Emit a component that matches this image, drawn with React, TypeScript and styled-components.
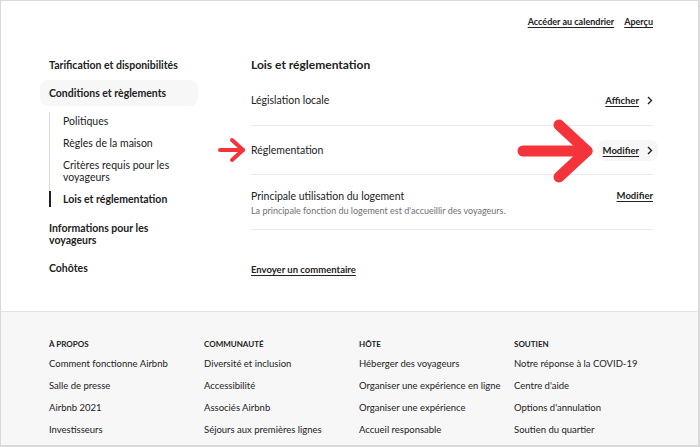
import styled, { createGlobalStyle } from 'styled-components';

const Global = createGlobalStyle`
  html, body { margin: 0; padding: 0; background: #fff; }
  body { font-family: Lato, "Liberation Sans", sans-serif; color: #222; }
  * { box-sizing: border-box; }
`;

const Frame = styled.div`
  position: relative;
  width: 700px;
  height: 447px;
  border: 1px solid #d9d9d9;
  border-right-width: 2px;
  border-bottom-width: 2px;
  overflow: hidden;
  display: flex;
  flex-direction: column;
`;

const Top = styled.div`
  height: 310px;
  padding: 10px 45px 0 39px;
`;

const TopLinks = styled.div`
  display: flex;
  justify-content: flex-end;
  gap: 10px;
  height: 20px;
  align-items: center;
`;

const Link = styled.a<{ $size?: number }>`
  font-size: ${p => p.$size ?? 10}px;
  font-weight: 700;
  color: #222;
  text-decoration: underline;
  text-underline-offset: 2px;
  cursor: pointer;
`;

const Columns = styled.div`
  display: flex;
  margin-top: 21px;
`;

const Sidebar = styled.nav`
  width: 158px;
  display: flex;
  flex-direction: column;
`;

const NavHead = styled.div<{ $active?: boolean }>`
  font-size: 10.5px;
  font-weight: 700;
  line-height: 12px;
  padding: 7px 9px;
  border-radius: 8px;
  background: ${p => (p.$active ? '#f7f7f7' : 'transparent')};
  & + & { margin-top: 2px; }
`;

const SubList = styled.div`
  margin: 6px 0 8px 9px;
  border-left: 1px solid #dddddd;
  display: flex;
  flex-direction: column;
  gap: 10px;
  padding: 3px 0 2px;
`;

const SubItem = styled.div<{ $active?: boolean }>`
  position: relative;
  font-size: 10.5px;
  line-height: 12px;
  padding-left: 13px;
  font-weight: ${p => (p.$active ? 700 : 400)};
  &::before {
    content: '';
    display: ${p => (p.$active ? 'block' : 'none')};
    position: absolute;
    left: -1px;
    top: -2px;
    bottom: -2px;
    width: 2px;
    background: #222;
  }
`;

const Main = styled.main`
  margin-left: 53px;
  flex: 1;
`;

const Title = styled.h2`
  margin: 0 0 3px;
  font-size: 12px;
  font-weight: 700;
  line-height: 16px;
  padding-top: 5px;
`;

const Row = styled.div<{ $h: number; $top?: boolean }>`
  height: ${p => p.$h}px;
  border-bottom: 1px solid #ebebeb;
  display: flex;
  align-items: ${p => (p.$top ? 'flex-start' : 'center')};
  justify-content: space-between;
  padding-top: ${p => (p.$top ? 15 : 0)}px;
`;

const RowText = styled.div`
  display: flex;
  flex-direction: column;
  gap: 2px;
`;

const RowLabel = styled.div`
  font-size: 10.5px;
  line-height: 13px;
`;

const RowSub = styled.div`
  font-size: 9px;
  line-height: 11px;
  color: #717171;
`;

const Action = styled.div<{ $shaded?: boolean }>`
  display: flex;
  align-items: center;
  gap: 8px;
  padding: 5px 5px;
  margin-right: -5px;
  border-radius: 7px;
  background: ${p => (p.$shaded ? '#f7f7f7' : 'transparent')};
`;

const Feedback = styled.div`
  margin-top: 27px;
`;

const Footer = styled.footer`
  flex: 1;
  border-top: 1px solid #e4e4e4;
  background: #f7f7f7;
  display: grid;
  grid-template-columns: repeat(4, 155px);
  padding: 27px 0 0 48px;
`;

const FooterCol = styled.div`
  display: flex;
  flex-direction: column;
`;

const FooterHead = styled.div`
  font-size: 8px;
  font-weight: 700;
  line-height: 10px;
  text-transform: uppercase;
  margin-bottom: 9px;
`;

const FooterLink = styled.div`
  font-size: 9.5px;
  line-height: 12px;
  & + & { margin-top: 10px; }
`;

const Arrow = styled.svg`
  position: absolute;
  pointer-events: none;
  overflow: visible;
`;

const Chevron = () => (
  <svg width="6" height="9" viewBox="0 0 6 9">
    <path d="M1 1 L4.5 4.5 L1 8" fill="none" stroke="#222" strokeWidth="1.4" />
  </svg>
);

const footer = [
  { head: 'À propos', items: ['Comment fonctionne Airbnb', 'Salle de presse', 'Airbnb 2021', 'Investisseurs'] },
  { head: 'Communauté', items: ['Diversité et inclusion', 'Accessibilité', 'Associés Airbnb', 'Séjours aux premières lignes'] },
  { head: 'Hôte', items: ['Héberger des voyageurs', 'Organiser une expérience en ligne', 'Organiser une expérience', 'Accueil responsable'] },
  { head: 'Soutien', items: ['Notre réponse à la COVID-19', "Centre d'aide", "Options d'annulation", 'Soutien du quartier'] },
];

export default function App() {
  return (
    <>
      <Global />
      <Frame>
        <Top>
          <TopLinks>
            <Link $size={9}>Accéder au calendrier</Link>
            <Link $size={9}>Aperçu</Link>
          </TopLinks>
          <Columns>
            <Sidebar>
              <NavHead>Tarification et disponibilités</NavHead>
              <NavHead $active>Conditions et règlements</NavHead>
              <SubList>
                <SubItem>Politiques</SubItem>
                <SubItem>Règles de la maison</SubItem>
                <SubItem>Critères requis pour les<br />voyageurs</SubItem>
                <SubItem $active>Lois et réglementation</SubItem>
              </SubList>
              <NavHead>Informations pour les<br />voyageurs</NavHead>
              <NavHead>Cohôtes</NavHead>
            </Sidebar>
            <Main>
              <Title>Lois et réglementation</Title>
              <Row $h={50}>
                <RowLabel>Législation locale</RowLabel>
                <Action>
                  <Link $size={9.5}>Afficher</Link>
                  <Chevron />
                </Action>
              </Row>
              <Row $h={49}>
                <RowLabel>Réglementation</RowLabel>
                <Action $shaded>
                  <Link $size={9.5}>Modifier</Link>
                  <Chevron />
                </Action>
              </Row>
              <Row $h={55} $top>
                <RowText>
                  <RowLabel>Principale utilisation du logement</RowLabel>
                  <RowSub>La principale fonction du logement est d'accueillir des voyageurs.</RowSub>
                </RowText>
                <Link $size={9.5}>Modifier</Link>
              </Row>
              <Feedback>
                <Link $size={9.5}>Envoyer un commentaire</Link>
              </Feedback>
            </Main>
          </Columns>
        </Top>
        <Footer>
          {footer.map(col => (
            <FooterCol key={col.head}>
              <FooterHead>{col.head}</FooterHead>
              {col.items.map(i => (
                <FooterLink key={i}>{i}</FooterLink>
              ))}
            </FooterCol>
          ))}
        </Footer>
        <Arrow style={{ left: 216, top: 137 }} width="30" height="26" viewBox="0 0 30 26">
          <g fill="none" stroke="#f5333a" strokeWidth="4" strokeLinecap="round" strokeLinejoin="round">
            <path d="M3 12 H26" />
            <path d="M15 2 L26 12 L15 22" />
          </g>
        </Arrow>
        <Arrow style={{ left: 514, top: 118 }} width="80" height="66" viewBox="0 0 80 66">
          <g fill="none" stroke="#f5333a" strokeWidth="11" strokeLinecap="round" strokeLinejoin="round">
            <path d="M8 32 H72" />
            <path d="M44 6 L72 32 L44 58" />
          </g>
        </Arrow>
      </Frame>
    </>
  );
}
